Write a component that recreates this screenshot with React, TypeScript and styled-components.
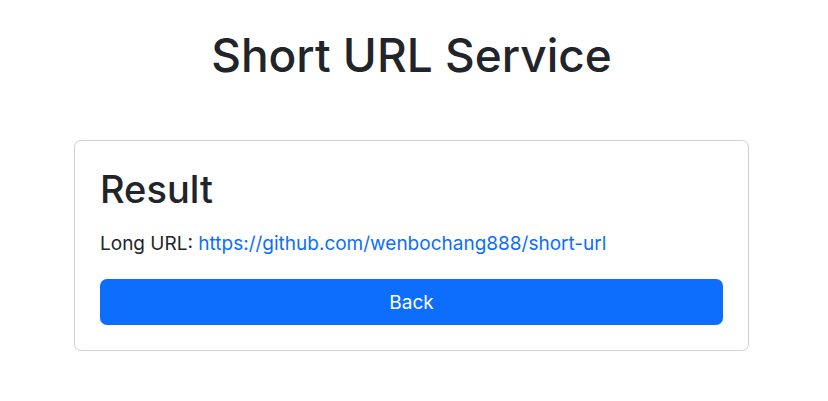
import React from "react";
import styled, { createGlobalStyle } from "styled-components";

const GlobalStyle = createGlobalStyle`
  * {
    box-sizing: border-box;
  }
  body {
    margin: 0;
    background-color: #ffffff;
    color: #212529;
    font-family: Inter, "Liberation Sans", sans-serif;
    font-size: 19px;
    line-height: 1.5;
  }
`;

const App = () => {
  const longUrl = "https://github.com/wenbochang888/short-url";

  return (
    <Wrapper>
      <GlobalStyle />
      <Title>Short URL Service</Title>
      <Card>
        <CardTitle>Result</CardTitle>
        <Line>
          Long URL: <Link href={longUrl}>{longUrl}</Link>
        </Line>
        <BackButton type="button">Back</BackButton>
      </Card>
    </Wrapper>
  );
};

export default App;

const Wrapper = styled.main`
  display: flex;
  flex-direction: column;
  align-items: center;
  padding: 28px 5px 0 0;
`;

const Title = styled.h1`
  margin: 0 0 57px;
  font-size: 46px;
  font-weight: 500;
  line-height: 1.2;
`;

const Card = styled.section`
  display: flex;
  flex-direction: column;
  width: 675px;
  padding: 26px 25px 25px;
  border: 1px solid rgba(0, 0, 0, 0.175);
  border-radius: 7px;
`;

const CardTitle = styled.h2`
  margin: 0 0 17px;
  font-size: 38px;
  font-weight: 500;
  line-height: 1.2;
`;

const Line = styled.p`
  margin: 0 0 21px;
`;

const Link = styled.a`
  color: #0d6efd;
  text-decoration: none;
`;

const BackButton = styled.button`
  height: 46px;
  border: none;
  border-radius: 7px;
  background-color: #0d6efd;
  color: #ffffff;
  font-family: inherit;
  font-size: 19px;
  cursor: pointer;
`;
